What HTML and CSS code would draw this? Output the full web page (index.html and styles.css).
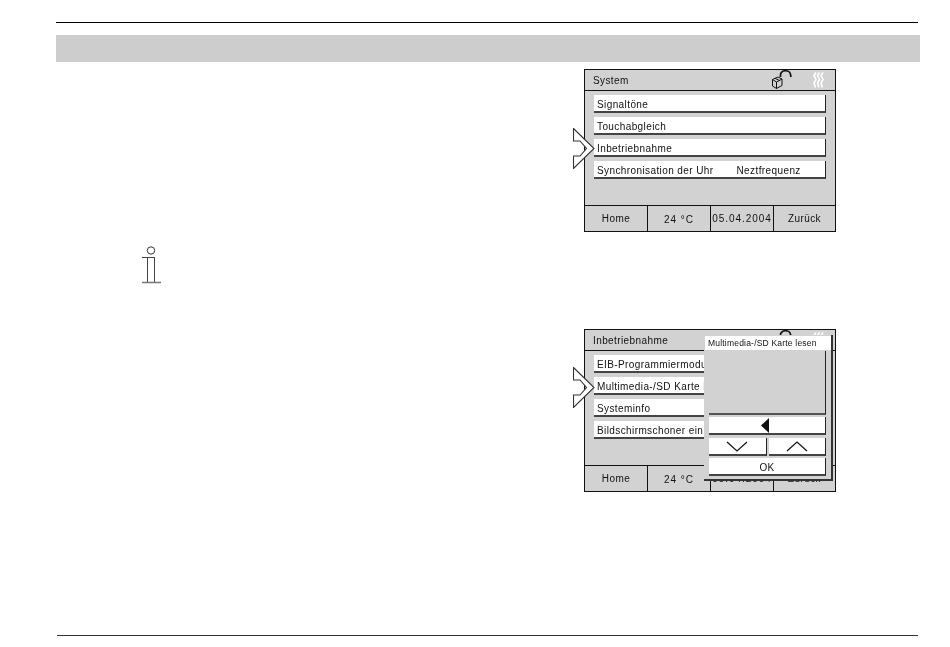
FILE: index.html
```html
<!DOCTYPE html>
<html lang="de">
<head>
<meta charset="utf-8">
<title>Inbetriebnahme</title>
<link rel="stylesheet" href="styles.css">
</head>
<body>
<div class="page">
  <div class="top-rule"></div>
  <div class="band"></div>

  <div class="screen-row first">
    <div class="screen">
      <svg class="pointer low" width="22" height="41" viewBox="0 0 22 41"><path d="M.5 .5 L21 20.500 L.5 40.500 V28 H7 L13.500 20.500 L7 13 H.5 Z" fill="#fff" stroke="#333" stroke-width="1.100"/></svg>
      <div class="titlebar">
        <span class="title">System</span>
        <svg class="lock" width="21" height="20" viewBox="0 0 21 20"><path d="M1.500 9.500 L7 7 L11 9 V15.500 L5.500 18.500 L1.500 16 Z M1.500 9.500 L5.500 12 L11 9 M5.500 12 V18.500 M4 8.300 L8.500 10.500" fill="none" stroke="#111" stroke-width="1"/><path d="M9.500 7 V5 A5 4 0 0 1 19.500 4.500 L20 7" fill="none" stroke="#111" stroke-width="1.700"/></svg>
        <svg class="heat" width="12" height="16" viewBox="0 0 12 16"><path d="M3 .5 L1 3.500 L3 7.500 L1 11 L2.500 15.500 M6.500 .5 L4.500 3.500 L6.500 7.500 L4.500 11 L6 15.500 M10 .5 L8 3.500 L10 7.500 L8 11 L9.500 15.500" fill="none" stroke="#fff" stroke-width="1.600"/></svg>
      </div>
      <div class="list">
        <div class="btn">Signaltöne</div>
        <div class="btn">Touchabgleich</div>
        <div class="btn">Inbetriebnahme</div>
        <div class="btn split"><span>Synchronisation der Uhr</span><span class="value">Neztfrequenz</span></div>
      </div>
      <div class="footer">
        <div class="cell">Home</div>
        <div class="cell wide">24 °C</div>
        <div class="cell date">05.04.2004</div>
        <div class="cell">Zurück</div>
      </div>
    </div>
  </div>

  <div class="note">
    <svg width="20" height="38" viewBox="0 0 20 38"><circle cx="9" cy="4.500" r="3.700" fill="none" stroke="#333"/><path d="M0 11.500 H13 M5.500 11.500 V36 M12.500 11.500 V36" fill="none" stroke="#444"/><path d="M0 36.500 H19" stroke="#777" stroke-width="1.500"/></svg>
  </div>

  <div class="screen-row second">
    <div class="screen">
      <svg class="pointer high" width="22" height="41" viewBox="0 0 22 41"><path d="M.5 .5 L21 20.500 L.5 40.500 V28 H7 L13.500 20.500 L7 13 H.5 Z" fill="#fff" stroke="#333" stroke-width="1.100"/></svg>
      <div class="titlebar">
        <span class="title">Inbetriebnahme</span>
        <svg class="lock" width="21" height="20" viewBox="0 0 21 20"><path d="M1.500 9.500 L7 7 L11 9 V15.500 L5.500 18.500 L1.500 16 Z" fill="none" stroke="#111" stroke-width="1"/><path d="M9.500 7 V5 A5 4 0 0 1 19.500 4.500 L20 7" fill="none" stroke="#111" stroke-width="1.700"/></svg>
        <svg class="heat" width="12" height="16" viewBox="0 0 12 16"><path d="M3 .5 L1 3.500 L3 7.500 L1 11 L2.500 15.500 M6.500 .5 L4.500 3.500 L6.500 7.500 L4.500 11 L6 15.500 M10 .5 L8 3.500 L10 7.500 L8 11 L9.500 15.500" fill="none" stroke="#fff" stroke-width="1.600"/></svg>
      </div>
      <div class="list">
        <div class="btn">EIB-Programmiermodus</div>
        <div class="btn">Multimedia-/SD Karte lesen</div>
        <div class="btn">Systeminfo</div>
        <div class="btn">Bildschirmschoner ein</div>
      </div>
      <div class="footer">
        <div class="cell">Home</div>
        <div class="cell wide">24 °C</div>
        <div class="cell date">05.04.2004</div>
        <div class="cell">Zurück</div>
      </div>
      <div class="popup">
        <div class="popup-title">Multimedia-/SD Karte lesen</div>
        <div class="popup-body">
          <div class="pane"></div>
          <div class="btn center"><svg class="back" width="8" height="15" viewBox="0 0 8 15"><path d="M8 0 V15 L0 7.500 Z" fill="#111"/></svg></div>
          <div class="pair">
            <div class="btn center"><svg width="22" height="11" viewBox="0 0 22 11"><path d="M1 1 L11 10 L21 1" fill="none" stroke="#111" stroke-width="1.200"/></svg></div>
            <div class="btn center"><svg width="22" height="11" viewBox="0 0 22 11"><path d="M1 10 L11 1 L21 10" fill="none" stroke="#111" stroke-width="1.200"/></svg></div>
          </div>
          <div class="btn center">OK</div>
        </div>
      </div>
    </div>
  </div>

  <div class="bottom-rule"></div>
</div>
</body>
</html>
```
FILE: styles.css
```css
* { box-sizing: border-box; }
html, body { margin: 0; background: #fff; }
body { font-family: "Liberation Sans", Arial, sans-serif; color: #111; }
.page { width: 950px; height: 647px; padding: 22px 30px 0 56px; display: flex; flex-direction: column; }
.top-rule { height: 1px; margin-right: 2px; background: #000; }
.band { height: 27px; margin-top: 12px; background: #cdcdcd; }
.screen-row { display: flex; justify-content: flex-end; padding-right: 84px; }
.screen-row.first { margin-top: 7px; }
.screen-row.second { margin-top: 14px; }
.screen {
  position: relative; width: 252px; height: 163px; background: #d2d2d2;
  border: 1px solid #111; display: flex; flex-direction: column;
  font-size: 10px; letter-spacing: .4px; filter: blur(.35px);
}
.pointer { position: absolute; left: -12px; z-index: 2; }
.pointer.low { top: 58px; }
.pointer.high { top: 37px; }
.titlebar { height: 21px; flex: none; border-bottom: 1px solid #111; padding: 0 10px 0 8px; display: flex; align-items: center; position: relative; }
.title { flex: 1; }
.lock { margin-right: 21px; flex: none; }
.heat { flex: none; }
.list { flex: 1; padding: 4px 9px 0; display: flex; flex-direction: column; gap: 4px; }
.btn {
  height: 18px; background: #fff; border-right: 1px solid #222; border-bottom: 2px solid #444;
  padding: 2px 3px 0; display: flex; align-items: center; white-space: nowrap; overflow: hidden;
}
.split .value { margin-left: 23px; }
.footer { height: 26px; flex: none; display: grid; grid-template-columns: 63px 63px 63px 1fr; border-top: 1px solid #111; }
.cell { display: flex; align-items: center; justify-content: center; border-right: 1px solid #111; }
.cell:last-child { border-right: 0; }
.cell.wide { letter-spacing: 1px; padding-top: 2px; }
.cell.date { letter-spacing: .95px; }
.note { height: 83px; padding: 14px 0 0 86px; }
.note svg { display: block; }
.popup {
  position: absolute; left: 119px; top: 5px; width: 129px; height: 146px; background: #d2d2d2;
  border-right: 2px solid #333; border-bottom: 2px solid #333; z-index: 3;
}
.popup-title { height: 14px; margin: 1px 0 0 1px; background: #fff; font-size: 8.500px; letter-spacing: .2px; padding-left: 3px; display: flex; align-items: center; white-space: nowrap; }
.popup-body { padding: 1px 5px 0; display: flex; flex-direction: column; gap: 2px; }
.pane { height: 64px; border-right: 1px solid #222; border-bottom: 2px solid #555; }
.pair { display: flex; gap: 2px; margin: 1px 0 0; }
.pair .btn { flex: 1; padding-top: 0; }
.center { justify-content: center; }
.back { margin-right: 4px; margin-top: -2px; }
.bottom-rule { height: 1px; margin: auto 2px 11px 1px; background: #333; }
```
